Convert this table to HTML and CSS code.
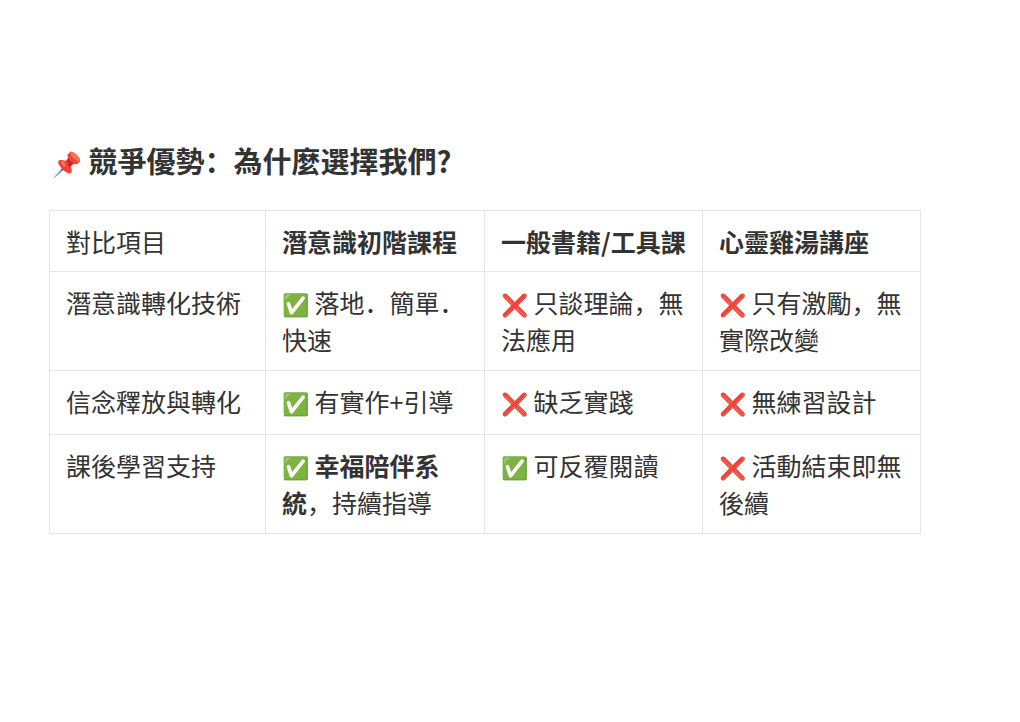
FILE: index.html
```html
<!DOCTYPE html>
<html lang="zh-CN">
<head>
<meta charset="utf-8">
<link rel="stylesheet" href="styles.css">
</head>
<body>
<main class="page">
  <h2 class="title"><span class="pin">📌</span> 競爭優勢：為什麼選擇我們?</h2>
  <table class="compare">
    <thead>
      <tr>
        <th class="plain">對比項目</th>
        <th>潛意識初階課程</th>
        <th>一般書籍/工具課</th>
        <th>心靈雞湯講座</th>
      </tr>
    </thead>
    <tbody>
      <tr>
        <td>潛意識轉化技術</td>
        <td><span class="emo">✅</span> 落地．簡單．快速</td>
        <td><span class="emo">❌</span> 只談理論，無法應用</td>
        <td><span class="emo">❌</span> 只有激勵，無實際改變</td>
      </tr>
      <tr class="single">
        <td>信念釋放與轉化</td>
        <td><span class="emo">✅</span> 有實作+引導</td>
        <td><span class="emo">❌</span> 缺乏實踐</td>
        <td><span class="emo">❌</span> 無練習設計</td>
      </tr>
      <tr>
        <td>課後學習支持</td>
        <td><span class="emo">✅</span> <strong>幸福陪伴系統</strong>，持續指導</td>
        <td><span class="emo">✅</span> 可反覆閱讀</td>
        <td><span class="emo">❌</span> 活動結束即無後續</td>
      </tr>
    </tbody>
  </table>
</main>
</body>
</html>
```
FILE: styles.css
```css
html, body {
  margin: 0;
  background: #ffffff;
}
.page {
  padding: 136px 0 0 49px;
  font-family: "Noto Sans CJK SC", "Noto Sans", sans-serif;
  color: #333333;
}
.title {
  margin: 0 0 23px 3px;
  font-size: 29px;
  line-height: 48px;
  font-weight: 700;
}
.pin {
  font-size: 24px;
}
.compare {
  border-collapse: collapse;
  font-size: 25px;
  line-height: 36px;
}
.compare th,
.compare td {
  border: 1px solid #e5e5e5;
  padding: 12px 16px;
  text-align: left;
  vertical-align: top;
}
.compare td {
  padding-bottom: 13px;
}
.compare tr.single td {
  padding-bottom: 14px;
}
.compare th:nth-child(1), .compare td:nth-child(1) { width: 183px; }
.compare th:nth-child(2), .compare td:nth-child(2) { width: 186px; }
.compare th:nth-child(3), .compare td:nth-child(3) { width: 185px; }
.compare th:nth-child(4), .compare td:nth-child(4) { width: 185px; }
.compare th { font-weight: 700; }
.compare th.plain { font-weight: 400; }
.compare strong { font-weight: 700; }
.emo {
  font-size: 22px;
}
```
